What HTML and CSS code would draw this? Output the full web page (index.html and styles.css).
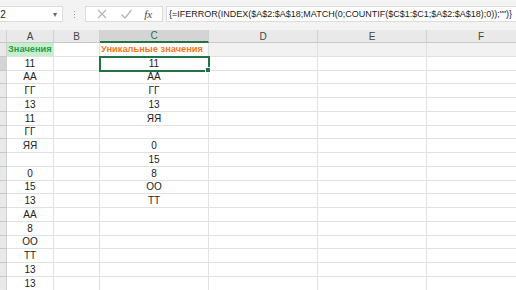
FILE: index.html
```html
<!DOCTYPE html>
<html>
<head>
  <title>Уникальные значения</title>
  <link rel="stylesheet" href="styles.css">
</head>

<body>
  <div id="formula-bar">
    <div class="name-box">
      <span class="name-text">C2</span>
      <span class="drop">&#9662;</span>
    </div>
    <div class="grip"><i></i><i></i><i></i></div>
    <div class="fx-buttons">
      <svg width="12" height="12" viewBox="0 0 12 12"><path d="M2 2 L10 10 M10 2 L2 10" stroke="#b4b4b4" stroke-width="1.2" fill="none"/></svg>
      <svg width="13" height="12" viewBox="0 0 13 12"><path d="M1.5 6.5 L5 10 L11.5 2" stroke="#b4b4b4" stroke-width="1.2" fill="none"/></svg>
      <span class="fx">fx</span>
    </div>
    <div class="formula">{=IFERROR(INDEX($A$2:$A$18;MATCH(0;COUNTIF($C$1:$C1;$A$2:$A$18);0));"")}</div>
  </div>

  <div class="sheet-wrap">
    <div class="sheet" id="sheet"></div>
  </div>

  <script>
    const colA = ['Значения', '11', 'АА', 'ГГ', '13', '11', 'ГГ', 'ЯЯ', '', '0', '15', '13', 'АА', '8', 'ОО', 'ТТ', '13', '13'];
    const colC = ['Уникальные значения', '11', 'АА', 'ГГ', '13', 'ЯЯ', '', '0', '15', '8', 'ОО', 'ТТ', '', '', '', '', '', ''];
    const cols = ['A', 'B', 'C', 'D', 'E', 'F'];
    const sheet = document.getElementById('sheet');

    function cell(cls, text) {
      const d = document.createElement('div');
      d.className = cls;
      d.textContent = text || '';
      sheet.appendChild(d);
      return d;
    }

    cell('corner');
    cols.forEach(c => cell(c === 'C' ? 'col-head active' : 'col-head', c));

    for (let r = 0; r < 18; r++) {
      cell(r === 1 ? 'row-head active' : 'row-head', String(r + 1));
      if (r === 0) {
        cell('cell title-a', colA[0]);
        cell('cell');
        cell('cell title-c', colC[0]);
        cell('cell shade');
        cell('cell shade');
        cell('cell shade');
        continue;
      }
      cell('cell', colA[r]);
      cell('cell');
      cell(r === 1 ? 'cell selected' : 'cell', colC[r]);
      cell('cell');
      cell('cell');
      cell('cell');
    }
  </script>
</body>
</html>
```

FILE: styles.css
```css
body {
  margin: 0;
  width: 516px;
  height: 290px;
  overflow: hidden;
  background: #ffffff;
  font-family: 'Liberation Sans', Arial, sans-serif;
  color: #222222;
}

#formula-bar {
  height: 30px;
  background: #f3f3f3;
  display: flex;
  align-items: flex-start;
  padding-top: 6px;
  box-sizing: border-box;
}

.name-box {
  width: 63px;
  height: 16px;
  background: #ffffff;
  border: 1px solid #dcdcdc;
  border-left: none;
  box-sizing: border-box;
  display: flex;
  align-items: center;
  justify-content: space-between;
  font-size: 10px;
  overflow: hidden;
}

.name-text {
  margin-left: -7px;
}

.drop {
  font-size: 8px;
  color: #666666;
  margin-right: 5px;
}

.grip {
  width: 22px;
  height: 16px;
  display: flex;
  flex-direction: column;
  align-items: center;
  justify-content: center;
  gap: 2px;
}

.grip i {
  width: 1px;
  height: 1px;
  background: #9a9a9a;
}

.fx-buttons {
  width: 78px;
  height: 16px;
  background: #ffffff;
  border: 1px solid #dcdcdc;
  box-sizing: border-box;
  display: flex;
  align-items: center;
  justify-content: space-around;
  padding: 0 4px;
}

.fx {
  font-family: 'Liberation Serif', serif;
  font-style: italic;
  font-size: 11px;
  color: #444444;
}

.formula {
  flex: 1;
  height: 16px;
  margin-left: 3px;
  background: #ffffff;
  border: 1px solid #dcdcdc;
  border-right: none;
  box-sizing: border-box;
  font-size: 9px;
  line-height: 14px;
  padding-left: 2px;
  white-space: nowrap;
  overflow: hidden;
  color: #222222;
}

.sheet-wrap {
  overflow: hidden;
  height: 260px;
}

.sheet {
  display: grid;
  grid-template-columns: 24px 47px 46px 109px 109px 109px 109px;
  grid-template-rows: 13px repeat(18, 13.75px);
  margin-left: -17px;
  font-size: 10px;
}

.corner,
.col-head,
.row-head {
  background: #e9e9e9;
  color: #444444;
  border-right: 1px solid #d0d0d0;
  border-bottom: 1px solid #c8c8c8;
  box-sizing: border-box;
  display: flex;
  align-items: center;
  justify-content: center;
}

.col-head.active {
  background: #d4d4d4;
  color: #217346;
  border-bottom: 2px solid #217346;
}

.row-head.active {
  background: #d4d4d4;
}

.cell {
  border-right: 1px solid #e1e1e1;
  border-bottom: 1px solid #e1e1e1;
  box-sizing: border-box;
  display: flex;
  align-items: center;
  justify-content: center;
  white-space: nowrap;
}

.cell.shade {
  background: #f2f2f2;
}

.title-a {
  justify-content: flex-start;
  padding-left: 1px;
  background: #c6efce;
  color: #2e9a4c;
  font-weight: bold;
  font-size: 9.3px;
}

.title-c {
  justify-content: flex-start;
  padding-left: 1px;
  color: #f07a1a;
  font-weight: bold;
  font-size: 9.3px;
}

.selected {
  position: relative;
  outline: 2px solid #217346;
  outline-offset: -1px;
  z-index: 2;
}

.selected::after {
  content: '';
  position: absolute;
  right: -3px;
  bottom: -3px;
  width: 4px;
  height: 4px;
  background: #217346;
  border: 1px solid #ffffff;
}
```
